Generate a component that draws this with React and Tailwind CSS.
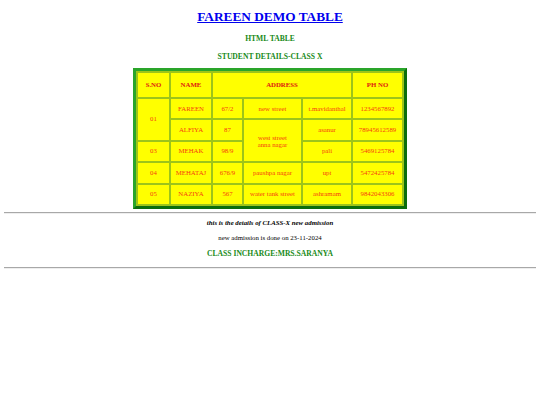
const students = [
  { no: '01', name: 'FAREEN', door: '67/2', street: 'new street', area: 't.mavidanthal', phone: '1234567892', noSpan: true },
  { name: 'ALFIYA', door: '87', street: 'west street anna nagar', area: 'asanur', phone: '78945612589', streetSpan: true },
  { no: '03', name: 'MEHAK', door: '98/9', area: 'pali', phone: '5469125784' },
  { no: '04', name: 'MEHATAJ', door: '676/9', street: 'paushpa nagar', area: 'upt', phone: '5472425784' },
  { no: '05', name: 'NAZIYA', door: '567', street: 'water tank street', area: 'ashramam', phone: '9842043306' },
];

const cell = 'bg-[#ffff00] text-center align-middle text-[6.8px] leading-[8px] text-[#f64010] px-[1px]';
const head = 'bg-[#ffff00] text-center align-middle text-[6.8px] leading-[8px] font-bold text-[#e01810]';

const App = () => {
  return (
    <div className="w-[540px] h-[405px] bg-white px-[4px] font-['Liberation_Serif',serif] text-black">
      {/* Headings */}
      <h1 className="mt-[9px] text-center text-[13.3px] leading-[16px] font-bold">
        <a href="#" className="text-[#0000ee] underline">FAREEN DEMO TABLE</a>
      </h1>
      <h3 className="mt-[9px] text-center text-[7.6px] leading-[10px] font-bold text-[#188a18]">HTML TABLE</h3>
      <h3 className="mt-[8px] text-center text-[7.6px] leading-[10px] font-bold text-[#188a18]">STUDENT DETAILS-CLASS X</h3>

      {/* Table */}
      <table className="mx-auto mt-[6px] table-fixed border-separate border-spacing-[2px] w-[274px] bg-[#9dc41a] border-[3px] border-t-[#2aa52a] border-l-[#2aa52a] border-b-[#0c6e0c] border-r-[#0c6e0c]">
        <colgroup>
          <col className="w-[31px]" />
          <col className="w-[40px]" />
          <col className="w-[29px]" />
          <col className="w-[57px]" />
          <col className="w-[48px]" />
          <col className="w-[49px]" />
        </colgroup>
        <tbody>
          <tr className="h-[24px]">
            <th className={head}>S.NO</th>
            <th className={head}>NAME</th>
            <th className={head} colSpan={3}>ADDRESS</th>
            <th className={head}>PH NO</th>
          </tr>
          {students.map((s) => (
            <tr key={s.name} className="h-[19.4px]">
              {s.no && <td className={cell} rowSpan={s.noSpan ? 2 : 1}>{s.no}</td>}
              <td className={cell}>{s.name}</td>
              <td className={cell}>{s.door}</td>
              {s.street && (
                <td className={cell} rowSpan={s.streetSpan ? 2 : 1}>
                  {s.streetSpan ? (
                    <span className="block leading-[7px]">west street<br />anna nagar</span>
                  ) : s.street}
                </td>
              )}
              <td className={cell}>{s.area}</td>
              <td className={cell}>{s.phone}</td>
            </tr>
          ))}
        </tbody>
      </table>

      <hr className="mt-[3px] border-0 border-t border-t-[#a8a8a8] border-b border-b-[#eeeeee]" />

      {/* Footer notes */}
      <p className="mt-[5px] text-center text-[6.8px] leading-[8px] font-bold italic">this is the details of CLASS-X new admission</p>
      <p className="mt-[7px] text-center text-[6.8px] leading-[8px]">new admission is done on 23-11-2024</p>
      <h3 className="mt-[7px] text-center text-[7.6px] leading-[10px] font-bold text-[#188a18]">CLASS INCHARGE:MRS.SARANYA</h3>

      <hr className="mt-[8px] border-0 border-t border-t-[#a8a8a8] border-b border-b-[#eeeeee]" />
    </div>
  );
};

export default App;
